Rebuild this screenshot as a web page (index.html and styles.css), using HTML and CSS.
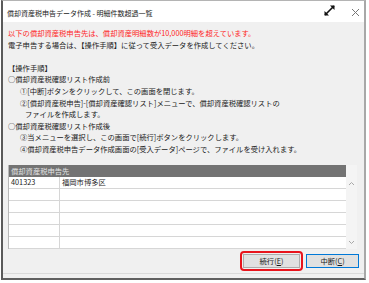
FILE: index.html
```html
<!DOCTYPE html>
<html lang="ja">

<head>
    <meta charset="UTF-8">
    <meta name="viewport" content="width=device-width, initial-scale=1.0">
    <title>明細件数超過一覧</title>
    <link rel="stylesheet" href="styles.css">
</head>

<body>
    <div class="window">
        <div class="titlebar">
            <span class="title">償却資産税申告データ作成 - 明細件数超過一覧</span>
            <svg class="icon-expand" width="13" height="13" viewBox="0 0 13 13">
                <path d="M2 11 L11 2" stroke="#111" stroke-width="1.6" fill="none" />
                <path d="M7 1.5 H11.5 V6 Z" fill="#111" />
                <path d="M1.5 7 V11.5 H6 Z" fill="#111" />
            </svg>
            <svg class="icon-close" width="9" height="9" viewBox="0 0 9 9">
                <path d="M1 1 L8 8 M8 1 L1 8" stroke="#777" stroke-width="1" fill="none" />
            </svg>
        </div>

        <div class="content">
            <div class="message">
                <p class="warn">以下の償却資産税申告先は、償却資産明細数が10,000明細を超えています。</p>
                <p>電子申告する場合は、【操作手順】に従って受入データを作成してください。</p>
                <p>&nbsp;</p>
                <p>【操作手順】</p>
                <p>○償却資産税確認リスト作成前</p>
                <p class="step">①[中断]ボタンをクリックして、この画面を閉じます。</p>
                <p class="step">②[償却資産税申告]-[償却資産確認リスト]メニューで、償却資産税確認リストの</p>
                <p class="cont">ファイルを作成します。</p>
                <p>○償却資産税確認リスト作成後</p>
                <p class="step">③当メニューを選択し、この画面で[続行]ボタンをクリックします。</p>
                <p class="step">④償却資産税申告データ作成画面の[受入データ]ページで、ファイルを受け入れます。</p>
            </div>

            <div class="list">
                <div class="grid">
                    <div class="row head">
                        <span class="cell">償却資産税申告先</span>
                    </div>
                    <div class="row">
                        <span class="cell code">401323</span>
                        <span class="cell">福岡市博多区</span>
                    </div>
                    <div class="row"><span class="cell code"></span><span class="cell"></span></div>
                    <div class="row"><span class="cell code"></span><span class="cell"></span></div>
                    <div class="row"><span class="cell code"></span><span class="cell"></span></div>
                    <div class="row"><span class="cell code"></span><span class="cell"></span></div>
                    <div class="row"><span class="cell code"></span><span class="cell"></span></div>
                </div>
                <div class="scrollbar">
                    <svg width="7" height="5" viewBox="0 0 7 5"><path d="M1 4 L3.5 1.5 L6 4" stroke="#a8a8a8" fill="none" /></svg>
                    <svg width="7" height="5" viewBox="0 0 7 5"><path d="M1 1 L3.5 3.5 L6 1" stroke="#a8a8a8" fill="none" /></svg>
                </div>
            </div>

            <div class="buttons">
                <span class="highlight">
                    <button class="button">続行(<u>E</u>)</button>
                </span>
                <button class="button default">中断(<u>C</u>)</button>
            </div>
        </div>
    </div>
</body>

</html>
```

FILE: styles.css
```css
body {
    margin: 0;
    background-color: white;
    font-family: "Noto Sans CJK JP", sans-serif;
    font-size: 7.3px;
    color: #1a1a1a;
}

.window {
    margin-left: 1px;
    width: 361px;
    border-top: 1px solid #b4b4b4;
    border-left: 2px solid #5a5a5a;
    border-right: 2px solid #a8a8a8;
    border-bottom: 2px solid #606060;
    background-color: #f0f0f0;
}

.titlebar {
    height: 21px;
    display: flex;
    align-items: center;
    background-color: white;
    padding: 0 4px;
}

.title {
    flex: 1;
    font-size: 7px;
    color: #222;
    padding-top: 3px;
}

.icon-expand {
    margin-right: 15px;
    margin-top: -2px;
}

.icon-close {
    margin-top: 1px;
}

.content {
    padding-top: 6px;
}

.message {
    padding-left: 5px;
}

.message p {
    margin: 0;
    line-height: 11.6px;
    white-space: nowrap;
}

.warn {
    color: #ff1e1e;
}

.step {
    padding-left: 12px;
}

.cont {
    padding-left: 17px;
}

.list {
    display: flex;
    margin: 9px 7px 0 5px;
    height: 84px;
}

.grid {
    flex: 1;
    border-left: 1px solid #b8b8b8;
    background-color: white;
}

.row {
    display: grid;
    grid-template-columns: 51px 1fr;
    height: 11px;
    border-bottom: 1px solid #d6d6d6;
    line-height: 11px;
}

.row.head {
    display: block;
    height: 12px;
    line-height: 12px;
    border-bottom: none;
    background-color: #737373;
    color: #e4e4e4;
}

.cell {
    padding-left: 2px;
}

.code {
    border-right: 1px solid #d6d6d6;
}

.scrollbar {
    width: 11px;
    display: flex;
    flex-direction: column;
    justify-content: space-between;
    align-items: center;
    padding: 16px 0 4px;
    background-color: #f4f4f4;
}

.buttons {
    display: flex;
    justify-content: flex-end;
    align-items: center;
    gap: 3px;
    margin-top: 3px;
    padding: 0 5px 2px 0;
    border-bottom: 1px solid #dadada;
    height: 19px;
    margin-bottom: 4px;
}

.highlight {
    display: flex;
    padding: 1px;
    border: 2px solid #e8141c;
    border-radius: 4px;
}

.button {
    width: 57px;
    height: 14px;
    padding: 0;
    font-family: "Noto Sans CJK JP", sans-serif;
    font-size: 7.3px;
    line-height: 12px;
    color: #1a1a1a;
    background-color: #e1e1e1;
    border: 1px solid #adadad;
    border-radius: 0;
}

.button.default {
    width: 53px;
    border-color: #0078d7;
}
```
